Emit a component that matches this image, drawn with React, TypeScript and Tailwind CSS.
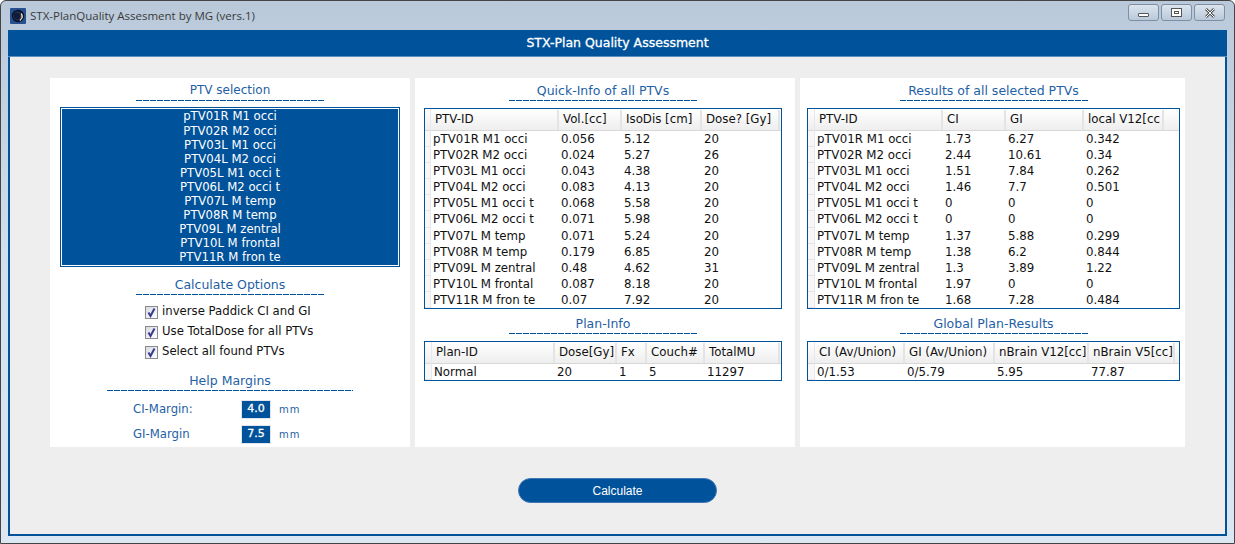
const font = "font-['DejaVu_Sans',sans-serif]";

const ptvs = ["pTV01R M1 occi","PTV02R M2 occi","PTV03L M1 occi","PTV04L M2 occi","PTV05L M1 occi t","PTV06L M2 occi t","PTV07L M temp","PTV08R M temp","PTV09L M zentral","PTV10L M frontal","PTV11R M fron te"];

const quick = [["0.056","5.12","20"],["0.024","5.27","26"],["0.043","4.38","20"],["0.083","4.13","20"],["0.068","5.58","20"],["0.071","5.98","20"],["0.071","5.24","20"],["0.179","6.85","20"],["0.48","4.62","31"],["0.087","8.18","20"],["0.07","7.92","20"]];
const results = [["1.73","6.27","0.342"],["2.44","10.61","0.34"],["1.51","7.84","0.262"],["1.46","7.7","0.501"],["0","0","0"],["0","0","0"],["1.37","5.88","0.299"],["1.38","6.2","0.844"],["1.3","3.89","1.22"],["1.97","0","0"],["1.68","7.28","0.484"]];

function Title({ text, width = 188, small = false }: { text: string; width?: number; small?: boolean }) {
  return (
    <div className="flex flex-col items-center">
      <div className={`${small ? "text-[12px]" : "text-[12.5px]"} leading-[15px] text-[#1f5fa5] whitespace-nowrap`}>{text}</div>
      <div className="h-[1px] mt-[2px] bg-[repeating-linear-gradient(90deg,#00529b_0,#00529b_6px,#dfe9f3_6px,#dfe9f3_7px)]" style={{ width }} />
    </div>
  );
}

function Table({ widths, head, rows, rowH = 16.1, headPad = 4, strip = 6 }: { widths: number[]; head: string[]; rows: string[][]; rowH?: number; headPad?: number; strip?: number }) {
  return (
    <div className="border border-[#00529b] bg-white overflow-hidden text-[11.8px] text-[#111]">
      <div className="flex">
        <div className="shrink-0 border-r border-[#e8e8e8] flex flex-col" style={{ width: strip }}>
          <div className="h-[22px] bg-gradient-to-b from-white to-[#eeeeee] border-b border-[#d8d8d8]" />
          {rows.map((_, i) => (
            <div key={i} className="border-b border-[#e6e6e6] bg-[#f7f7f7]" style={{ height: rowH }} />
          ))}
        </div>
        <div className="flex-1 min-w-0">
          <div className="flex h-[22px] pt-[1px] bg-gradient-to-b from-white to-[#eeeeee] border-b border-[#d8d8d8]">
            {widths.map((w, i) => (
              <div key={i} className="shrink-0 flex items-center border-r-2 border-[#e4e4e4] overflow-hidden whitespace-nowrap" style={{ width: w, paddingLeft: headPad }}>
                {head[i]}
              </div>
            ))}
          </div>
          {rows.map((r, i) => (
            <div key={i} className="flex" style={{ height: rowH }}>
              {widths.map((w, j) => (
                <div key={j} className="shrink-0 pl-[2px] leading-[16px] whitespace-nowrap overflow-hidden" style={{ width: w }}>
                  {r[j]}
                </div>
              ))}
            </div>
          ))}
        </div>
      </div>
    </div>
  );
}

function Check({ label }: { label: string }) {
  return (
    <div className="flex items-center gap-[4px] h-[20px] text-[11.7px] text-[#111]">
      <div className="w-[13px] h-[13px] border border-[#8a8a8a] bg-gradient-to-br from-[#d6dae2] to-white flex items-center justify-center">
        <svg width="11" height="11" viewBox="0 0 11 11"><path d="M2.5 5.5 L4.5 9 L8.5 1.5" fill="none" stroke="#3a3a8c" strokeWidth="2" /></svg>
      </div>
      <span>{label}</span>
    </div>
  );
}

function Margin({ label, value }: { label: string; value: string }) {
  return (
    <div className="flex items-center h-[19px] text-[11.7px]">
      <span className="w-[108px] text-[#1f5fa5]">{label}</span>
      <div className="w-[30px] h-[19px] bg-[#00529b] border border-[#dfe6ee] text-white flex items-center justify-center text-[11px] [-webkit-text-stroke:0.3px_white]">{value}</div>
      <span className="ml-[8px] text-[#1f5fa5] text-[10px] tracking-[1px]">mm</span>
    </div>
  );
}

export default function App() {
  return (
    <div className={`w-[1235px] h-[544px] ${font} border border-[#444] rounded-t-[6px] bg-gradient-to-b from-[#b9c9da] via-[#d3e1ee] to-[#dbe7f3] flex flex-col overflow-hidden`}>
      <div className="h-[29px] shrink-0 flex items-center pl-[9px] pr-[9px]">
        <svg width="16" height="16" viewBox="0 0 16 16" className="shrink-0">
          <rect width="16" height="16" rx="1" fill="#27508f" />
          <circle cx="8" cy="8" r="6.2" fill="#0c1226" />
          <circle cx="7.5" cy="8" r="4.4" fill="#2a3a6b" />
          <circle cx="7" cy="8" r="3.4" fill="#111a38" />
          <path d="M11.5 5.5 A5 5 0 0 1 10 12.5 A6 6 0 0 0 11.5 5.5" fill="#f3d9a8" stroke="#f3d9a8" />
        </svg>
        <span className="ml-[4px] text-[11.5px] text-[#3a3a3a] whitespace-nowrap font-['Open_Sans',sans-serif]">STX-PlanQuality Assesment by MG (vers.1)</span>
        <div className="ml-auto flex gap-[2px] -mt-[6px]">
          <div className="w-[31px] h-[17px] rounded-[3px] border border-[#7f8ea3] bg-gradient-to-b from-[#dce5ef] to-[#b9c8d9] flex items-center justify-center">
            <div className="w-[11px] h-[4px] mt-[4px] border border-[#555] bg-white rounded-[1px]" />
          </div>
          <div className="w-[31px] h-[17px] rounded-[3px] border border-[#7f8ea3] bg-gradient-to-b from-[#dce5ef] to-[#b9c8d9] flex items-center justify-center">
            <div className="w-[11px] h-[9px] border border-[#555] bg-white flex items-center justify-center"><div className="w-[5px] h-[3px] border border-[#555]" /></div>
          </div>
          <div className="w-[31px] h-[17px] rounded-[3px] border border-[#7f8ea3] bg-gradient-to-b from-[#dce5ef] to-[#b9c8d9] flex items-center justify-center">
            <svg width="12" height="10" viewBox="0 0 12 10"><path d="M2 1 L10 9 M10 1 L2 9" stroke="#555" strokeWidth="2.6" /><path d="M2 1 L10 9 M10 1 L2 9" stroke="#fff" strokeWidth="1" /></svg>
          </div>
        </div>
      </div>

      <div className="mx-[7px] h-[506px] border-x-[2px] border-b-[2px] border-[#00529b] flex flex-col">
        <div className="h-[27px] shrink-0 bg-[#00529b] border-b border-[#5f8fc0] -mx-[2px] flex items-center justify-center text-white text-[12.5px] [-webkit-text-stroke:0.3px_white]">
          STX-Plan Quality Assessment
        </div>
        <div className="flex-1 bg-[#eeeeee] pt-[21px] pl-[40px] flex flex-col">
          <div className="flex gap-[5px] h-[369px]">
            {/* Left panel */}
            <div className="w-[360px] bg-white flex flex-col items-center">
              <div className="mt-[5px]"><Title text="PTV selection" small /></div>
              <div className="mt-[6px] w-[340px] h-[160px] shrink-0 border border-[#00529b] p-[1px]">
                <div className="h-full bg-[#00529b] text-white text-[11.7px] flex flex-col items-center justify-center">
                  {ptvs.map((p) => (
                    <div key={p} className="h-[14.1px] shrink-0 leading-[14px] whitespace-nowrap">{p}</div>
                  ))}
                </div>
              </div>
              <div className="mt-[10px]"><Title text="Calculate Options" /></div>
              <div className="mt-[7px] self-start ml-[95px] flex flex-col">
                <Check label="inverse Paddick CI and GI" />
                <Check label="Use TotalDose for all PTVs" />
                <Check label="Select all found PTVs" />
              </div>
              <div className="mt-[11px]"><Title text="Help Margins" width={246} /></div>
              <div className="mt-[9px] self-start ml-[83px] flex flex-col gap-[6px]">
                <Margin label="CI-Margin:" value="4.0" />
                <Margin label="GI-Margin" value="7.5" />
              </div>
            </div>

            {/* Middle panel */}
            <div className="w-[380px] bg-white px-[9px] pr-[13px]">
              <div className="mt-[5px]"><Title text="Quick-Info of all PTVs" /></div>
              <div className="mt-[7px]">
                <Table widths={[128, 63, 80, 78]} head={["PTV-ID", "Vol.[cc]", "IsoDis [cm]", "Dose? [Gy]"]} rows={quick.map((r, i) => [ptvs[i], ...r])} />
              </div>
              <div className="mt-[7px]"><Title text="Plan-Info" /></div>
              <div className="mt-[7px]">
                <Table widths={[123, 62, 30, 58, 75]} head={["Plan-ID", "Dose[Gy]", "Fx", "Couch#", "TotalMU"]} rows={[["Normal", "20", "1", "5", "11297"]]} rowH={16} strip={7} />
              </div>
            </div>

            {/* Right panel */}
            <div className="w-[385px] bg-white pl-[7px] pr-[5px]">
              <div className="mt-[5px]"><Title text="Results of all selected PTVs" /></div>
              <div className="mt-[7px]">
                <Table widths={[128, 63, 78, 80]} head={["PTV-ID", "CI", "GI", "local V12[cc"]} rows={results.map((r, i) => [ptvs[i], ...r])} strip={7} />
              </div>
              <div className="mt-[7px]"><Title text="Global Plan-Results" /></div>
              <div className="mt-[7px]">
                <Table widths={[90, 90, 94, 86]} head={["CI (Av/Union)", "GI (Av/Union)", "nBrain V12[cc]", "nBrain V5[cc]"]} rows={[["0/1.53", "0/5.79", "5.95", "77.87"]]} rowH={16} strip={7} />
              </div>
            </div>
          </div>

          <div className="mt-[31px] ml-[468px] w-[199px] h-[25px] rounded-full bg-[#00529b] border border-[#3d78b4] flex items-center justify-center text-white text-[12px] font-['Liberation_Sans_Narrow','Liberation_Sans',sans-serif]">
            Calculate
          </div>
        </div>
      </div>
    </div>
  );
}
